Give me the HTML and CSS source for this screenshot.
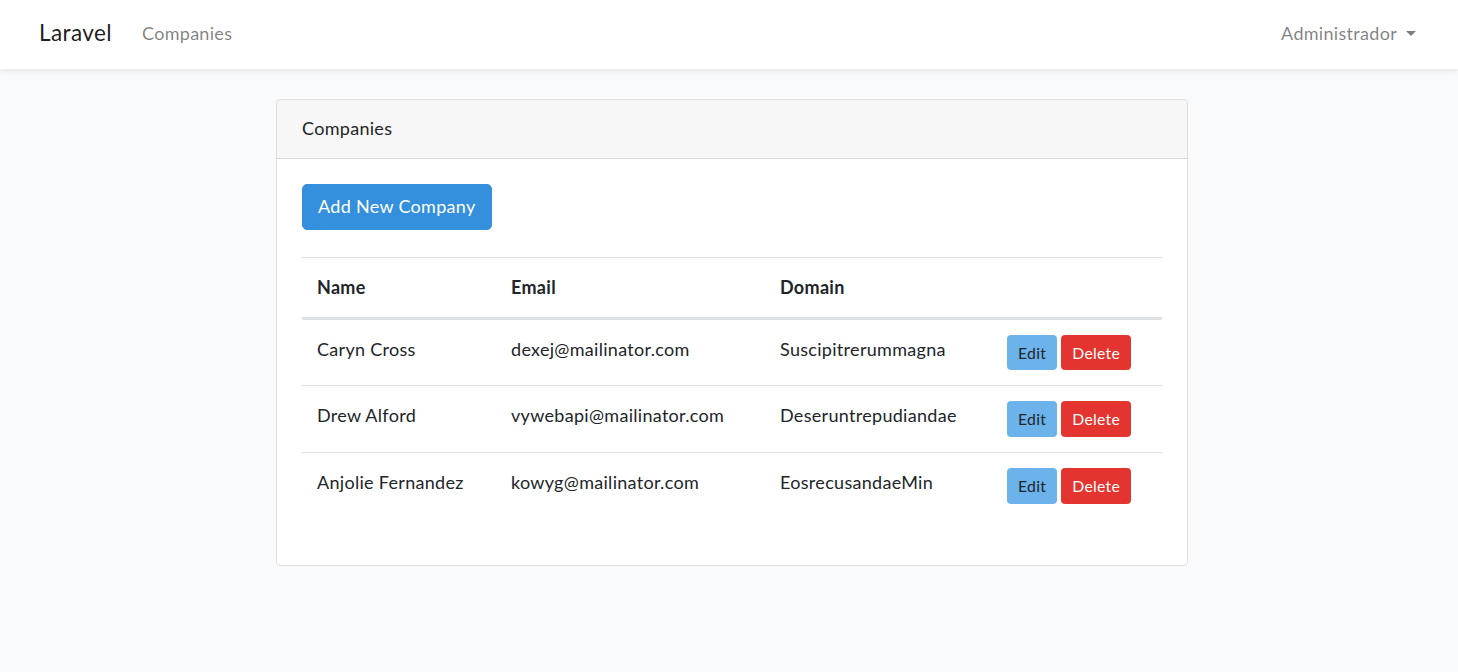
FILE: index.html
```html
<!DOCTYPE html>
<html lang="en">
<head>
<meta charset="utf-8">
<title>Laravel</title>
<link rel="stylesheet" href="styles.css">
</head>
<body>
<nav class="navbar">
  <a class="brand" href="#">Laravel</a>
  <ul class="nav nav-left">
    <li><a class="nav-link" href="#">Companies</a></li>
  </ul>
  <ul class="nav nav-right">
    <li><a class="nav-link dropdown-toggle" href="#">Administrador</a></li>
  </ul>
</nav>
<main class="main">
  <div class="card">
    <div class="card-header">Companies</div>
    <div class="card-body">
      <a class="btn btn-primary" href="#">Add New Company</a>
      <table class="table">
        <thead>
          <tr>
            <th class="col-name">Name</th>
            <th class="col-email">Email</th>
            <th class="col-domain">Domain</th>
            <th></th>
          </tr>
        </thead>
        <tbody>
          <tr>
            <td>Caryn Cross</td>
            <td>dexej@mailinator.com</td>
            <td>Suscipitrerummagna</td>
            <td class="actions"><a class="btn-sm btn-info" href="#">Edit</a><a class="btn-sm btn-danger" href="#">Delete</a></td>
          </tr>
          <tr>
            <td>Drew Alford</td>
            <td>vywebapi@mailinator.com</td>
            <td>Deseruntrepudiandae</td>
            <td class="actions"><a class="btn-sm btn-info" href="#">Edit</a><a class="btn-sm btn-danger" href="#">Delete</a></td>
          </tr>
          <tr>
            <td>Anjolie Fernandez</td>
            <td>kowyg@mailinator.com</td>
            <td>EosrecusandaeMin</td>
            <td class="actions"><a class="btn-sm btn-info" href="#">Edit</a><a class="btn-sm btn-danger" href="#">Delete</a></td>
          </tr>
        </tbody>
      </table>
    </div>
  </div>
</main>
</body>
</html>
```
FILE: styles.css
```css
* { box-sizing: border-box; }
html, body { margin: 0; padding: 0; }
body {
  background: #f8fafc;
  color: #212529;
  font-family: "Lato", "Liberation Sans", sans-serif;
  font-size: 18px;
  line-height: 28.8px;
  letter-spacing: 0.3px;
}
a { text-decoration: none; }
.navbar {
  display: flex;
  align-items: center;
  height: 69px;
  padding: 0 32px 2px 39px;
  background: #fff;
  box-shadow: 0 2.5px 5px rgba(0,0,0,0.075);
  position: relative;
}
.brand {
  color: rgba(0,0,0,0.9);
  font-size: 22.5px;
  line-height: 36px;
  padding-bottom: 2px;
  margin-right: 20px;
  letter-spacing: 0.4px;
}
.nav {
  list-style: none;
  margin: 0;
  padding: 0;
  display: flex;
}
.nav-left { flex: 1; }
.nav-link {
  display: block;
  padding: 10px;
  color: rgba(0,0,0,0.5);
}
.dropdown-toggle::after {
  content: "";
  display: inline-block;
  margin-left: 9px;
  vertical-align: 4.6px;
  border-top: 5.4px solid;
  border-right: 5.4px solid transparent;
  border-left: 5.4px solid transparent;
  border-bottom: 0;
}
.main {
  padding: 30px 0 30px 276px;
}
.card {
  width: 912px;
  background: #fff;
  border: 1px solid rgba(0,0,0,0.125);
  border-radius: 5px;
  overflow: hidden;
}
.card-header {
  padding: 14px 25px 15px;
  background: rgba(0,0,0,0.03);
  border-bottom: 1px solid rgba(0,0,0,0.125);
}
.card-body {
  padding: 25px 25px 26.5px;
}
.btn {
  display: inline-block;
  padding: 7.5px 15px;
  font-size: 18px;
  line-height: 28.8px;
  border: 1px solid transparent;
  border-radius: 5px;
}
.btn-primary {
  background: #3490dc;
  border-color: #3490dc;
  color: #fff;
}
.table {
  width: 100%;
  margin-top: 27.5px;
  margin-bottom: 20px;
  border-collapse: collapse;
}
.table th, .table td {
  padding: 15px;
  text-align: left;
  vertical-align: top;
  border-top: 1px solid #dee2e6;
}
.table th { font-weight: 700; }
.table thead th {
  border-bottom: 3px solid #dee2e6;
}
.col-name { width: 194px; }
.col-email { width: 269px; }
.col-domain { width: 227px; }
.actions { white-space: nowrap; }
.btn-sm {
  display: inline-block;
  padding: 5px 10px;
  font-size: 15.75px;
  line-height: 23.6px;
  border: 1px solid transparent;
  border-radius: 3.5px;
  vertical-align: top;
}
.btn-sm + .btn-sm { margin-left: 4px; }
.btn-info {
  background: #6cb2eb;
  border-color: #6cb2eb;
  color: #212529;
}
.btn-danger {
  background: #e3342f;
  border-color: #e3342f;
  color: #fff;
}
```
